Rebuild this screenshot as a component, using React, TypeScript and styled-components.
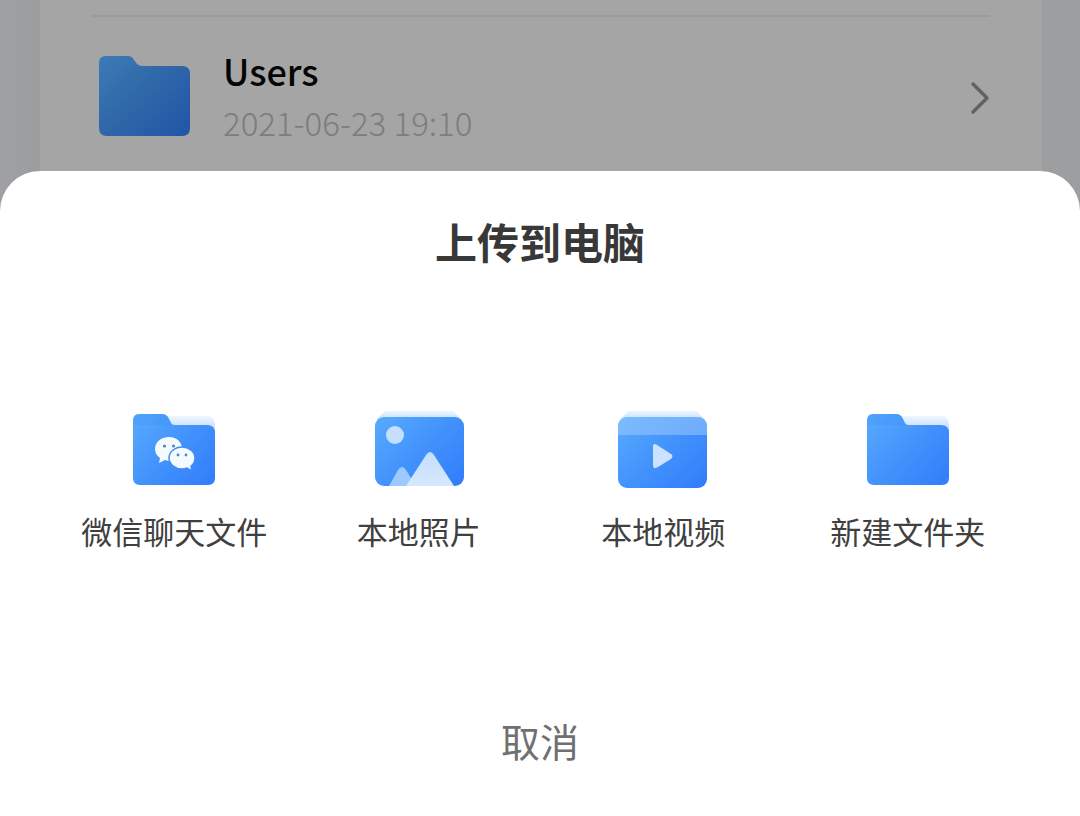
import React from "react";
import styled, { createGlobalStyle } from "styled-components";

const GlobalStyle = createGlobalStyle`
  * { box-sizing: border-box; }
  body {
    margin: 0;
    background: #9d9ea0;
    font-family: "Noto Sans CJK SC", "Noto Sans", sans-serif;
  }
  button {
    border: 0;
    padding: 0;
    background: none;
    font: inherit;
    cursor: pointer;
  }
  svg { display: block; }
`;

const Screen = styled.div`
  min-height: 100vh;
  display: flex;
  flex-direction: column;
  background: linear-gradient(90deg, #9ea0a3 0, #9b9d9d 40px, #9d9ea0 60px);
`;

const FileList = styled.main`
  margin: 0 38px -40px 40px;
  padding: 15px 52px 40px;
  background: #a5a5a5;
`;

const FileRow = styled.button`
  width: 100%;
  height: 156px;
  padding: 4px 0 0 6px;
  display: flex;
  align-items: center;
  border-top: 2px solid #9b9b9b;
  text-align: left;
`;

const FileInfo = styled.span`
  flex: 1;
  display: flex;
  flex-direction: column;
  margin-left: 32px;
`;

const FileName = styled.span`
  font-size: 36px;
  line-height: 52px;
  font-weight: 500;
  color: #050505;
`;

const FileDate = styled.time`
  font-size: 33px;
  line-height: 52px;
  font-weight: 300;
  color: #7b7d80;
`;

const Sheet = styled.section`
  position: relative;
  flex: 1;
  display: flex;
  flex-direction: column;
  align-items: center;
  padding: 38px 0;
  border-radius: 40px 40px 0 0;
  background: #fff;
`;

const Title = styled.h1`
  margin: 0;
  font-size: 42px;
  line-height: 64px;
  font-weight: 700;
  color: #383838;
`;

const Actions = styled.div`
  width: 100%;
  margin-top: 138px;
  padding: 0 50px 0 52px;
  display: grid;
  grid-template-columns: repeat(4, 1fr);
`;

const Action = styled.button`
  display: flex;
  flex-direction: column;
  align-items: center;
  gap: 16px;
  font-size: 31px;
  line-height: 48px;
  color: #404040;
  white-space: nowrap;
`;

const Cancel = styled.button`
  margin-top: 155px;
  font-size: 39px;
  line-height: 60px;
  color: #707070;
`;

function Gradients() {
  return (
    <svg width="0" height="0" style={{ position: "absolute" }} aria-hidden="true">
      <defs>
        <linearGradient id="blue" x1="0" y1="0.1" x2="1" y2="0.9">
          <stop offset="0" stopColor="#56a9fd" />
          <stop offset="0.5" stopColor="#4292fc" />
          <stop offset="1" stopColor="#327efb" />
        </linearGradient>
        <linearGradient id="dim" x1="0" y1="0" x2="1" y2="0.9">
          <stop offset="0" stopColor="#3c7cb5" />
          <stop offset="0.5" stopColor="#2f67a8" />
          <stop offset="1" stopColor="#2256a9" />
        </linearGradient>
        <linearGradient id="back" x1="0" y1="0" x2="0" y2="1">
          <stop offset="0" stopColor="#eef6ff" />
          <stop offset="1" stopColor="#a9cffb" />
        </linearGradient>
        <linearGradient id="peak" x1="0" y1="0" x2="0" y2="1">
          <stop offset="0" stopColor="#c3defd" />
          <stop offset="1" stopColor="#d7e8fe" />
        </linearGradient>
      </defs>
    </svg>
  );
}

function RowFolder() {
  return (
    <svg width="93" height="82" viewBox="0 0 93 82" aria-hidden="true">
      <path
        fill="url(#dim)"
        d="M8 1H30Q34 1 36 5L39 9Q41 11 45 11H84Q92 11 92 19V73Q92 81 84 81H9Q1 81 1 73V8Q1 1 8 1Z"
      />
    </svg>
  );
}

function Folder({ children }: { children?: React.ReactNode }) {
  return (
    <svg width="92" height="80" viewBox="0 0 92 80" aria-hidden="true">
      <path fill="url(#back)" d="M36 5H79Q87 5 87 14V26H36Z" />
      <path
        fill="url(#blue)"
        d="M11 3H34Q39 3 41 8L43 12Q44 14 48 14H79Q87 14 87 22V67Q87 74 80 74H12Q5 74 5 67V10Q5 3 11 3Z"
      />
      <path fill="#3587f5" fillOpacity="0.22" d="M5 14V10Q5 3 11 3H34Q39 3 41 8L44 14Z" />
      {children}
    </svg>
  );
}

function WechatMark() {
  return (
    <g>
      <path
        fill="#f5faff"
        d="M41 26C33 26 27 31 27 38C27 42 29 45 32 47L31 52L37 49Q39 50 43 50C50 49 54 44 54 38C54 31 49 26 41 26Z"
      />
      <path
        fill="#f5faff"
        stroke="#3f8dfa"
        strokeWidth="1.5"
        d="M54 36C47 36 41 41 41 47C41 53 47 58 54 58Q57 58 59 57L64 60L63 55C66 53 67 50 67 47C67 41 61 36 54 36Z"
      />
      <g fill="#4b86cf">
        <circle cx="36.5" cy="35" r="1.6" />
        <circle cx="45.5" cy="35" r="1.6" />
        <circle cx="50" cy="44" r="1.4" />
        <circle cx="58" cy="44" r="1.4" />
      </g>
    </g>
  );
}

function Photo() {
  return (
    <svg width="92" height="80" viewBox="0 0 92 80" aria-hidden="true">
      <path fill="url(#back)" d="M12 0H80L88 8V14H4V8Z" />
      <rect x="2" y="6" width="89" height="69" rx="9" fill="url(#blue)" />
      <circle cx="22" cy="24" r="9" fill="#c5dffd" />
      <path fill="#9dc9fc" d="M16 75L25 59Q29 53 33 59L43 75Z" />
      <path fill="url(#peak)" d="M33 75L53 44Q57 38 61 44L81 75Z" />
    </svg>
  );
}

function Video() {
  return (
    <svg width="92" height="80" viewBox="0 0 92 80" aria-hidden="true">
      <path fill="url(#back)" d="M11 0H80L88 9V14H3V9Z" />
      <rect x="1" y="6" width="89" height="71" rx="9" fill="url(#blue)" />
      <path fill="#a5ceff" fillOpacity="0.48" d="M1 24V15Q1 6 10 6H81Q90 6 90 15V24Z" />
      <path fill="#cce2ff" d="M36 36Q36 31 40 34L54 43Q57 45 54 48L41 56Q36 59 36 54Z" />
    </svg>
  );
}

const actions = [
  { label: "微信聊天文件", icon: <Folder><WechatMark /></Folder> },
  { label: "本地照片", icon: <Photo /> },
  { label: "本地视频", icon: <Video /> },
  { label: "新建文件夹", icon: <Folder /> },
];

export default function App() {
  return (
    <Screen>
      <GlobalStyle />
      <Gradients />
      <FileList>
        <FileRow type="button">
          <RowFolder />
          <FileInfo>
            <FileName>Users</FileName>
            <FileDate dateTime="2021-06-23T19:10">2021-06-23 19:10</FileDate>
          </FileInfo>
          <svg width="20" height="38" viewBox="0 0 20 38" aria-hidden="true">
            <path
              d="M3 7L17 21L3 35"
              fill="none"
              stroke="#626262"
              strokeWidth="3.5"
              strokeLinecap="round"
              strokeLinejoin="round"
            />
          </svg>
        </FileRow>
      </FileList>
      <Sheet role="dialog" aria-labelledby="sheet-title">
        <Title id="sheet-title">上传到电脑</Title>
        <Actions>
          {actions.map(({ label, icon }) => (
            <Action type="button" key={label}>
              {icon}
              {label}
            </Action>
          ))}
        </Actions>
        <Cancel type="button">取消</Cancel>
      </Sheet>
    </Screen>
  );
}
